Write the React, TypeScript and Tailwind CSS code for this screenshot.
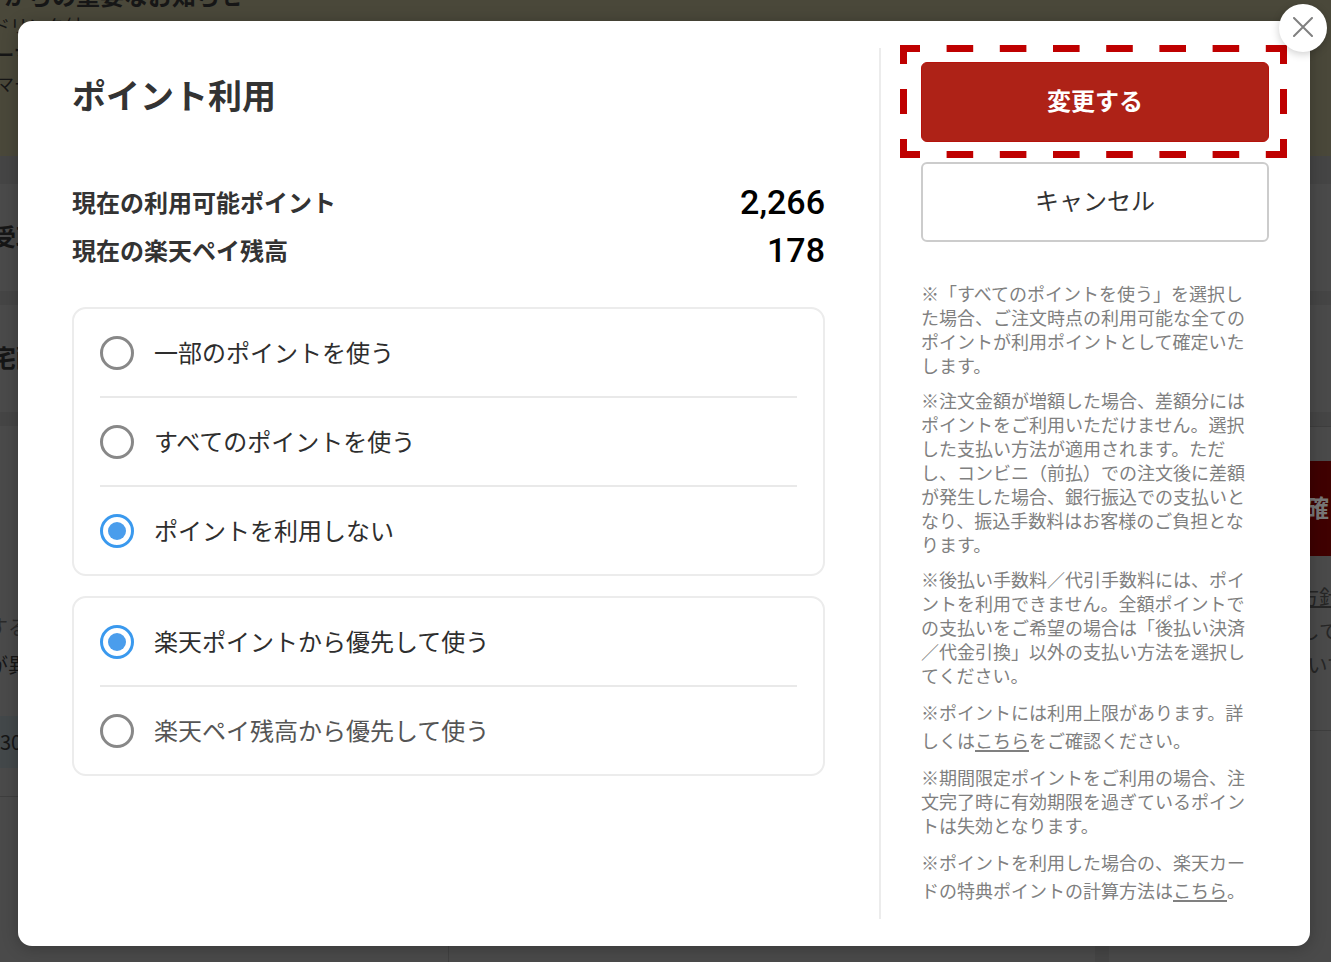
import { ReactNode, useState } from "react";

type Option = { value: string; label: string; muted?: boolean };

const usageOptions: Option[] = [
  { value: "partial", label: "一部のポイントを使う" },
  { value: "all", label: "すべてのポイントを使う" },
  { value: "none", label: "ポイントを利用しない" },
];

const priorityOptions: Option[] = [
  { value: "points", label: "楽天ポイントから優先して使う" },
  { value: "pay", label: "楽天ペイ残高から優先して使う", muted: true },
];

const balances = [
  { label: "現在の利用可能ポイント", value: "2,266" },
  { label: "現在の楽天ペイ残高", value: "178" },
];

function RadioCard({
  name,
  legend,
  options,
  initial,
}: {
  name: string;
  legend: string;
  options: Option[];
  initial: string;
}) {
  const [selected, setSelected] = useState(initial);

  return (
    <div
      role="radiogroup"
      aria-label={legend}
      className="rounded-[14px] border-2 border-[#ececec] px-[26px] divide-y-2 divide-[#e9e9e9]"
    >
      {options.map((o) => (
        <label
          key={o.value}
          className={`flex h-[89px] cursor-pointer items-center gap-5 text-2xl last:h-[87px] ${
            o.muted ? "text-[#555]" : "text-[#2e2e2e]"
          }`}
        >
          <input
            type="radio"
            name={name}
            value={o.value}
            checked={selected === o.value}
            onChange={() => setSelected(o.value)}
            className="grid size-[34px] shrink-0 appearance-none place-items-center rounded-full border-[3px] border-[#888] before:size-[18px] before:rounded-full checked:border-[#3a99ee] checked:before:bg-[#4a9dec]"
          />
          <span className="pb-0.5">{o.label}</span>
        </label>
      ))}
    </div>
  );
}

function Note({ children, loose }: { children: ReactNode; loose?: boolean }) {
  return <p className={loose ? "leading-[28px]" : "leading-[24px]"}>{children}</p>;
}

function DashedFrame() {
  return (
    <svg
      aria-hidden="true"
      className="pointer-events-none absolute -left-[21px] -top-[17px] h-[113px] w-[calc(100%+39px)]"
      stroke="#bf0000"
      strokeWidth="14"
    >
      <g strokeDasharray="26.6 26.6" strokeDashoffset="6.6">
        <line x1="0" y1="0" x2="100%" y2="0" />
        <line x1="0" y1="100%" x2="100%" y2="100%" />
      </g>
      <g strokeDasharray="25 25" strokeDashoffset="6">
        <line x1="0" y1="0" x2="0" y2="100%" />
        <line x1="100%" y1="0" x2="100%" y2="100%" />
      </g>
    </svg>
  );
}

// The dimmed order page behind the dialog
function Backdrop() {
  return (
    <div
      aria-hidden="true"
      className="flex h-screen flex-col overflow-hidden whitespace-nowrap bg-[#454545] text-[#161616]"
    >
      <div className="h-[156px] shrink-0 bg-[#4a483a] text-lg">
        <div className="-mt-5 pl-1 text-2xl leading-[30px] font-bold">からの重要なお知らせ</div>
        <div className="-ml-2 leading-[30px]">ドリンク付</div>
        <div className="-ml-1 leading-[28px] font-bold">ーマ</div>
        <div className="-ml-1 leading-[30px]">マー</div>
      </div>
      <div className="mt-7 flex h-[107px] shrink-0 items-center bg-[#4a4a4a] pb-1 text-2xl font-bold">
        <span className="-ml-2">受取</span>
      </div>
      <div className="mt-3.5 flex h-[107px] shrink-0 items-center bg-[#4a4a4a] pb-1 text-2xl font-bold">
        <span className="-ml-2">宅配</span>
      </div>
      <div className="mt-3.5 flex flex-1 text-xl">
        <div className="w-[449px] border-r border-[#404040] bg-[#4a4a4a] pt-[182px]">
          <div className="-ml-3 leading-[38px] text-[#2a2a2a]">する</div>
          <div className="-ml-3 leading-[38px]">が異</div>
          <div className="mt-8 bg-[#43484a] leading-[52px]">30</div>
          <div className="mt-7 border-t border-[#3e3e3e]" />
        </div>
        <div className="flex-1 bg-[#4a4a4a]" />
        <div className="ml-3.5 w-[222px] border-t border-[#3e3e3e] bg-[#4a4a4a]">
          <div className="mt-[34px] bg-[#3f0100] pr-0.5 pb-1 text-right text-2xl leading-[91px] font-bold text-[#777]">
            確
          </div>
          <div className="-mr-2 mt-6 text-right leading-[34px] text-[#262626] underline">方針</div>
          <div className="-mr-2 text-right leading-[34px] text-[#262626]">して</div>
          <div className="-mr-4 text-right leading-[34px] text-[#262626]">いて</div>
          <div className="mt-12 border-t border-[#3e3e3e]" />
        </div>
      </div>
    </div>
  );
}

export default function App() {
  return (
    <div className="font-['Noto_Sans_CJK_JP',sans-serif]">
      <Backdrop />
      <div className="absolute inset-0 flex pt-[21px] pr-[21px] pb-4 pl-[18px]">
        <div
          role="dialog"
          aria-modal="true"
          aria-labelledby="dialog-title"
          className="relative flex flex-1 rounded-[14px] bg-white py-[27px] pr-[41px] pl-[54px] shadow-[0_2px_16px_rgba(0,0,0,0.25)]"
        >
          <section className="flex-1 pt-[23px] pr-[54px]">
            <h1 id="dialog-title" className="text-[34px] leading-[48px] font-bold text-[#333]">
              ポイント利用
            </h1>
            <dl className="mt-[59px] mb-[33px]">
              {balances.map((b) => (
                <div key={b.label} className="flex h-12 items-center justify-between">
                  <dt className="text-2xl font-bold text-[#333]">{b.label}</dt>
                  <dd className="font-[Roboto,sans-serif] text-[34px] leading-[48px] font-medium text-black">
                    {b.value}
                  </dd>
                </div>
              ))}
            </dl>
            <div className="space-y-5">
              <RadioCard name="usage" legend="ポイントの利用方法" options={usageOptions} initial="none" />
              <RadioCard name="priority" legend="優先して使う残高" options={priorityOptions} initial="points" />
            </div>
          </section>

          <aside className="w-[390px] shrink-0 border-l-2 border-[#ececec] pt-3.5 pl-10">
            <div className="relative">
              <button
                type="button"
                className="h-20 w-full rounded-[6px] border border-[#b5120b] bg-[#ae2217] pb-1 text-2xl font-bold text-white"
              >
                変更する
              </button>
              <DashedFrame />
            </div>
            <button
              type="button"
              className="mt-5 h-20 w-full rounded-[6px] border-2 border-[#ccc] bg-white pb-1 text-2xl text-[#333]"
            >
              キャンセル
            </button>
            <div className="mt-[39px] space-y-[11px] pr-3 text-lg text-[#808080]">
              <Note>
                ※「すべてのポイントを使う」を選択した場合、ご注文時点の利用可能な全てのポイントが利用ポイントとして確定いたします。
              </Note>
              <Note>
                ※注文金額が増額した場合、差額分にはポイントをご利用いただけません。選択した支払い方法が適用されます。ただし、コンビニ（前払）での注文後に差額が発生した場合、銀行振込での支払いとなり、振込手数料はお客様のご負担となります。
              </Note>
              <Note>
                ※後払い手数料／代引手数料には、ポイントを利用できません。全額ポイントでの支払いをご希望の場合は「後払い決済／代金引換」以外の支払い方法を選択してください。
              </Note>
              <Note loose>
                ※ポイントには利用上限があります。詳しくは
                <a href="#limit" className="underline decoration-2 underline-offset-2">こちら</a>
                をご確認ください。
              </Note>
              <Note>
                ※期間限定ポイントをご利用の場合、注文完了時に有効期限を過ぎているポイントは失効となります。
              </Note>
              <Note loose>
                ※ポイントを利用した場合の、楽天カードの特典ポイントの計算方法は
                <a href="#card" className="underline decoration-2 underline-offset-2">こちら</a>。
              </Note>
            </div>
          </aside>

          <button
            type="button"
            aria-label="閉じる"
            className="absolute -top-[17px] -right-[17px] grid size-12 place-items-center rounded-full bg-white pb-0.5 text-[#808080] shadow-[0_2px_8px_rgba(0,0,0,0.2)]"
          >
            <svg viewBox="0 0 20 20" className="size-5" fill="none" stroke="currentColor" strokeWidth="2" strokeLinecap="round">
              <path d="M1 1l18 18M19 1L1 19" />
            </svg>
          </button>
        </div>
      </div>
    </div>
  );
}
